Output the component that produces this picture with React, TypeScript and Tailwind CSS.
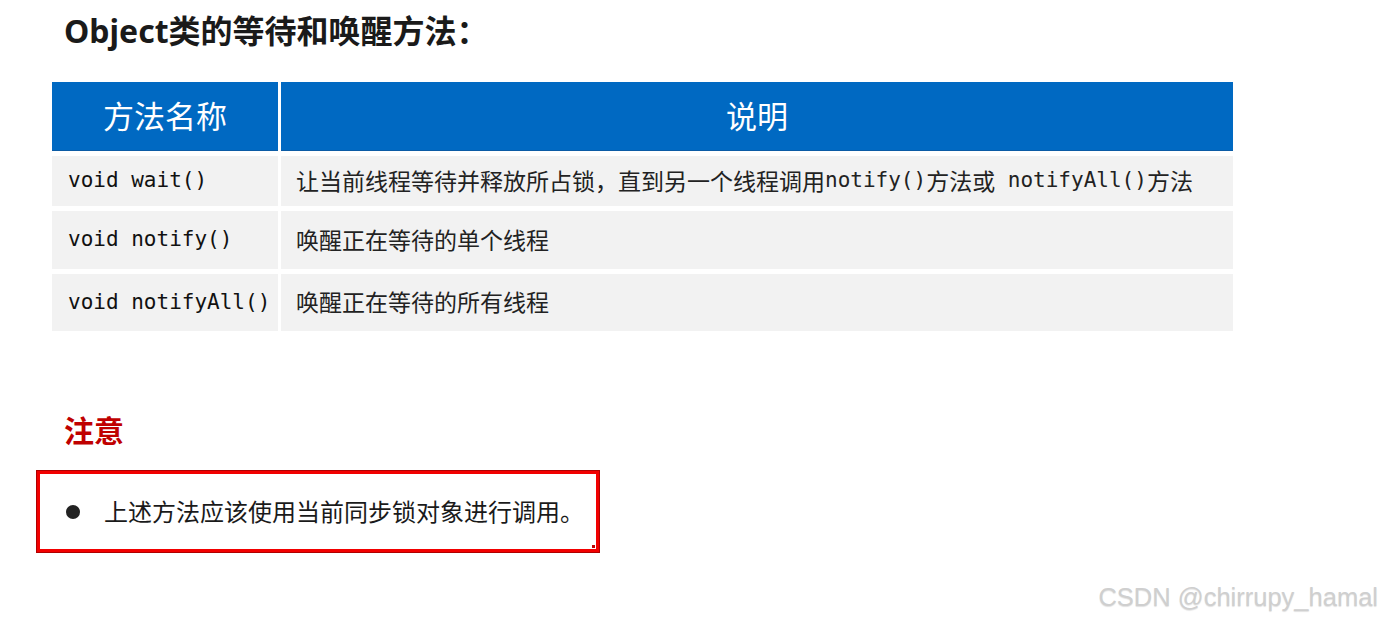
import React from "react"

const sans = "font-['Noto_Sans','Noto_Sans_CJK_SC',sans-serif]"
const mono = "font-['DejaVu_Sans_Mono','Noto_Sans_CJK_SC',monospace]"

const rows = [
  {
    name: "void wait()",
    height: "h-[50px]",
    desc: (
      <>
        让当前线程等待并释放所占锁，直到另一个线程调用<span className={mono + " text-[21px]"}>notify()</span>方法或
        <span className={mono + " text-[21px]"}> notifyAll()</span>方法
      </>
    ),
  },
  { name: "void notify()", height: "h-[58px]", desc: "唤醒正在等待的单个线程" },
  { name: "void notifyAll()", height: "h-[57px]", desc: "唤醒正在等待的所有线程" },
]

export default function App() {
  return (
    <div className={`relative w-[1382px] h-[617px] overflow-hidden bg-white ${sans}`}>
      <h1 className="ml-[64px] pt-[11px] text-[32px] font-bold leading-[40px] text-[#1a1a1a]">
        Object类的等待和唤醒方法：
      </h1>

      <div className="ml-[52px] mt-[31px] w-[1181px] flex flex-col gap-y-[5px]">
        <div className="flex gap-x-[3px] h-[69px]">
          <div className="w-[226px] flex items-center justify-center bg-[#0069c2] text-white text-[31px] border-b border-[#0b5ba5]">
            方法名称
          </div>
          <div className="flex-1 flex items-center justify-center bg-[#0069c2] text-white text-[31px] border-b border-[#0b5ba5]">
            说明
          </div>
        </div>
        {rows.map((row, i) => (
          <div key={i} className={`flex gap-x-[3px] ${row.height}`}>
            <div className={`w-[226px] flex items-center pl-[16px] bg-[#f2f2f2] text-[21px] text-[#111] ${mono}`}>
              {row.name}
            </div>
            <div className="flex-1 flex items-center pl-[15px] bg-[#f2f2f2] text-[23px] text-[#222] whitespace-pre">
              {row.desc}
            </div>
          </div>
        ))}
      </div>

      <div className="ml-[64px] mt-[81px] text-[30px] font-bold leading-[38px] text-[#c00000]">注意</div>

      <div className="relative ml-[37px] mt-[21px] w-[562px] h-[81px] border-[3px] border-[#f20000] shadow-[0_0_0_1px_#b00000] flex items-center pl-[26px] gap-x-[24px]">
        <span className="w-[14px] h-[14px] rounded-full bg-[#222]" />
        <span className="text-[24px] text-[#1a1a1a]">上述方法应该使用当前同步锁对象进行调用。</span>
        <span className="absolute right-[1px] bottom-[1px] w-[3px] h-[3px] bg-[#c00000]" />
      </div>

      <div className="absolute right-[4px] top-[578px] font-['Liberation_Sans',sans-serif] text-[25.5px] text-[#cfcfcf] [text-shadow:0_1px_1px_rgba(0,0,0,0.12)]">
        CSDN @chirrupy_hamal
      </div>
    </div>
  )
}
